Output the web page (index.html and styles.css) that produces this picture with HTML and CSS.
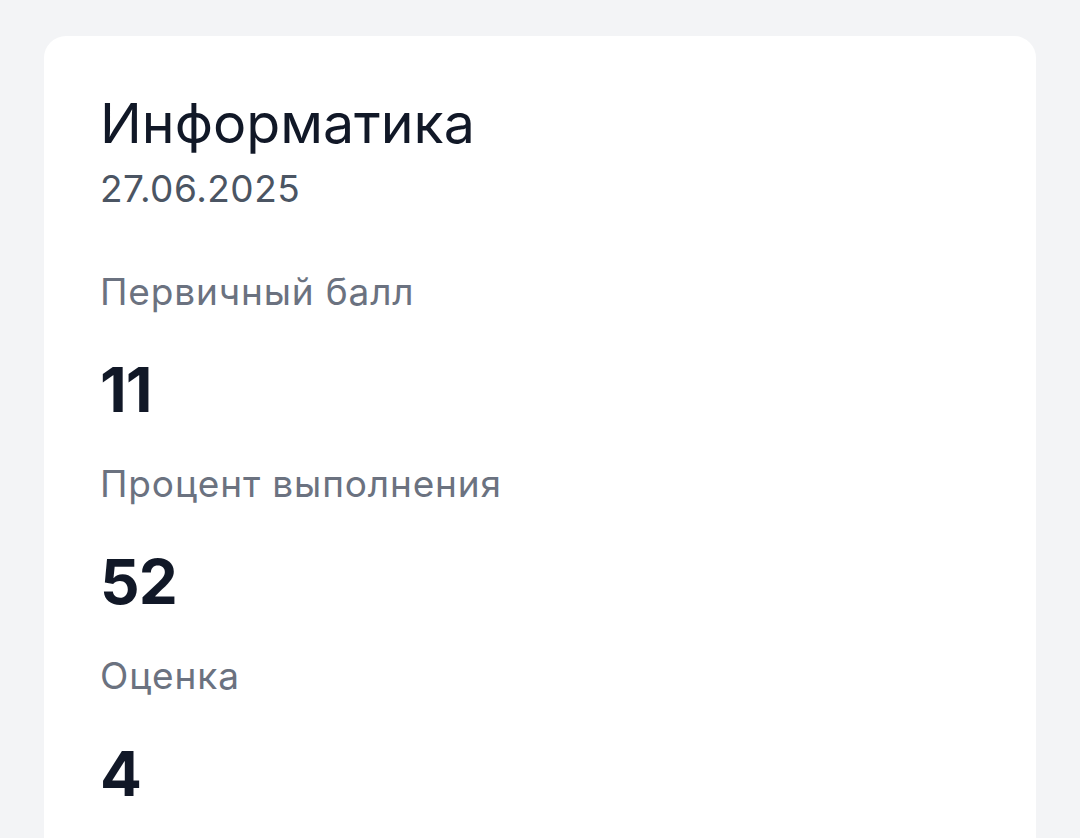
FILE: index.html
```html
<!DOCTYPE html>
<html lang="ru">

<head>
    <meta charset="UTF-8">
    <meta name="viewport" content="width=device-width, initial-scale=1.0">
    <title>Результат</title>
    <link rel="stylesheet" href="styles.css">
</head>

<body>
    <div class="page">
        <div class="card">
            <div class="head">
                <h1 class="subject">Информатика</h1>
                <div class="date">27.06.2025</div>
            </div>

            <div class="stats">
                <div class="stat">
                    <div class="label">Первичный балл</div>
                    <div class="value">11</div>
                </div>
                <div class="stat">
                    <div class="label">Процент выполнения</div>
                    <div class="value">52</div>
                </div>
                <div class="stat">
                    <div class="label">Оценка</div>
                    <div class="value">4</div>
                </div>
            </div>
        </div>
    </div>
</body>

</html>
```

FILE: styles.css
```css
* {
    box-sizing: border-box;
}

body {
    margin: 0;
    background: #f3f4f6;
    font-family: Inter, "Noto Sans", sans-serif;
}

.page {
    padding: 36px 44px 0;
    min-height: 100vh;
}

.card {
    background: #fff;
    border-radius: 22px;
    padding: 55px 52px 60px 56px;
    min-height: 900px;
}

.head {
    display: flex;
    flex-direction: column;
    gap: 12px;
}

.subject {
    margin: 0;
    font-size: 55.5px;
    line-height: 64px;
    font-weight: 400;
    color: #111827;
}

.date {
    font-size: 37px;
    line-height: 44px;
    letter-spacing: 0.5px;
    color: #4b5563;
}

.stats {
    margin-top: 59px;
    display: flex;
    flex-direction: column;
    gap: 36px;
}

.stat {
    display: flex;
    flex-direction: column;
    gap: 40px;
}

.label {
    font-size: 37px;
    line-height: 44px;
    letter-spacing: 0.85px;
    color: #6b7280;
}

.value {
    font-size: 62px;
    line-height: 72px;
    font-weight: 700;
    letter-spacing: -1px;
    color: #111827;
}
```
